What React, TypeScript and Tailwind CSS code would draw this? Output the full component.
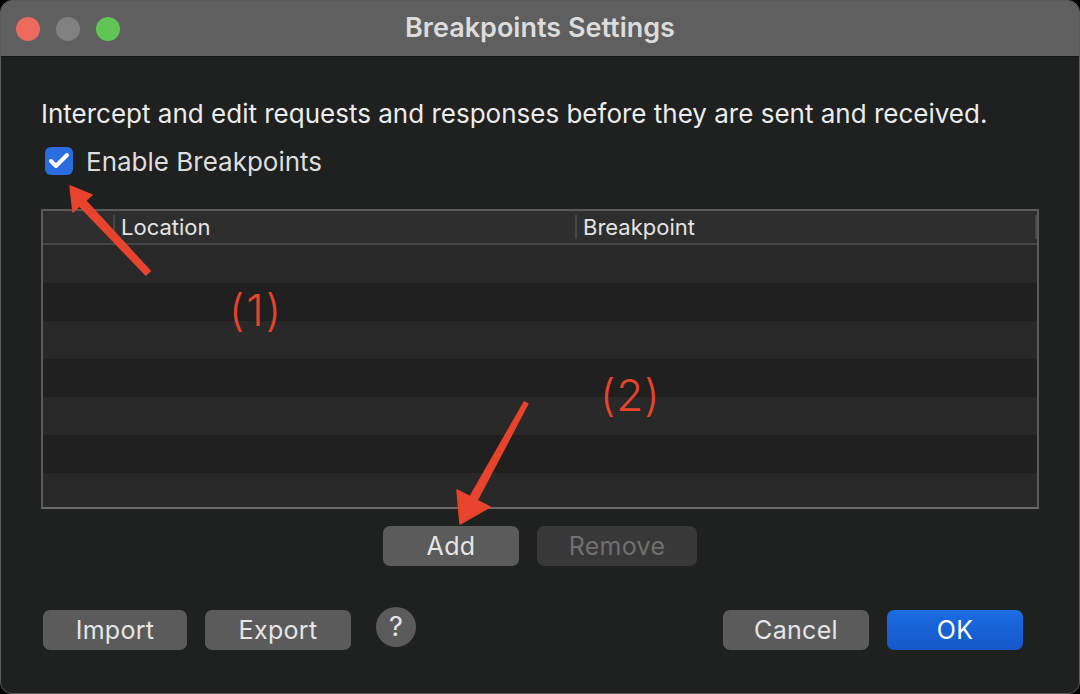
import { Check } from "lucide-react";

const rows = [0, 1, 2, 3, 4, 5, 6];

const Btn = ({ label, w, variant }: { label: string; w: string; variant: "gray" | "dim" | "blue" }) => {
  const tone =
    variant === "blue"
      ? "bg-gradient-to-b from-[#1b6ce2] to-[#1558c9] text-white"
      : variant === "dim"
        ? "bg-[#383838] text-[#707070]"
        : "bg-[#5b5b5b] text-[#e6e6e6]";
  return (
    <button className={`${w} h-[40px] rounded-[7px] text-[25px] tracking-[0.3px] leading-none flex items-center justify-center ${tone}`}>
      {label}
    </button>
  );
};

const App = () => {
  return (
    <div className="w-[1080px] h-[694px] bg-black relative" style={{ fontFamily: "Inter, 'Noto Sans', sans-serif" }}>
      <div className="h-full flex flex-col rounded-[12px] overflow-hidden border border-[#5a5a5a] bg-[#1f2020]">
        {/* title bar */}
        <div className="h-[56px] shrink-0 bg-[#5e5f5e] border-b border-[#161616] flex items-center relative">
          <div className="flex items-center gap-[16px] pl-[15px]">
            <span className="w-[24px] h-[24px] rounded-full bg-[#ec6b5f]" />
            <span className="w-[24px] h-[24px] rounded-full bg-[#808180]" />
            <span className="w-[24px] h-[24px] rounded-full bg-[#61c555]" />
          </div>
          <div className="absolute inset-0 flex items-center justify-center text-[27px] font-semibold text-[#dcdcdc] pointer-events-none">
            Breakpoints Settings
          </div>
        </div>

        {/* body */}
        <div className="flex-1 px-[40px] pt-[41px] flex flex-col">
          <p className="text-[26px] leading-[32px] text-[#ececec]">
            Intercept and edit requests and responses before they are sent and received.
          </p>
          <div className="mt-[15px] h-[32px] flex items-center">
            <span className="ml-[4px] w-[28px] h-[28px] rounded-[6px] bg-[#2a6de0] flex items-center justify-center">
              <Check size={24} strokeWidth={4} className="text-white" />
            </span>
            <span className="ml-[13px] text-[26px] text-[#dedede]">Enable Breakpoints</span>
          </div>

          {/* table */}
          <div className="mt-[32px] h-[300px] border-2 border-[#5a5a5a] border-b-[#6a6a6a] flex flex-col overflow-hidden">
            <div className="h-[34px] shrink-0 bg-[#2e2e2e] border-b-2 border-[#464646] flex items-center text-[22px] text-[#e4e4e4]">
              <div className="w-[70px] h-full" />
              <div className="w-[2px] h-[24px] bg-[#474747]" />
              <div className="w-[460px] pl-[6px]">Location</div>
              <div className="w-[2px] h-[24px] bg-[#474747]" />
              <div className="flex-1 pl-[6px]">Breakpoint</div>
              <div className="w-[2px] h-[24px] bg-[#474747]" />
            </div>
            {rows.map((r) => (
              <div key={r} className={`h-[38px] shrink-0 ${r % 2 === 0 ? "bg-[#292929]" : "bg-[#202020]"}`} />
            ))}
          </div>

          <div className="mt-[17px] flex justify-center gap-[18px]">
            <Btn label="Add" w="w-[136px]" variant="gray" />
            <Btn label="Remove" w="w-[160px]" variant="dim" />
          </div>

          <div className="mt-[44px] flex items-center pl-[2px] pr-[16px]">
            <Btn label="Import" w="w-[144px]" variant="gray" />
            <div className="ml-[18px]">
              <Btn label="Export" w="w-[146px]" variant="gray" />
            </div>
            <span className="ml-[25px] w-[40px] h-[40px] -mt-[6px] rounded-full bg-[#5b5b5b] text-[#e6e6e6] text-[27px] flex items-center justify-center">
              ?
            </span>
            <div className="ml-auto flex gap-[18px]">
              <Btn label="Cancel" w="w-[146px]" variant="gray" />
              <Btn label="OK" w="w-[136px]" variant="blue" />
            </div>
          </div>
        </div>
      </div>

      {/* annotations */}
      <svg className="absolute inset-0 pointer-events-none" width="1080" height="694">
        <polygon
          points="150.2,271 85.5,200.6 92,195 70,186 73,212 79.5,206 145.8,275"
          fill="#e8432c"
          stroke="#e8432c"
          strokeWidth="1.5"
          strokeLinejoin="round"
        />
        <polygon
          points="527.8,404 477.1,500.5 490,507 460,524 457,490 470.1,496.7 524.2,402"
          fill="#e8432c"
          stroke="#e8432c"
          strokeWidth="1.5"
          strokeLinejoin="round"
        />
      </svg>
      <span className="absolute left-[229px] top-[283px] text-[44px] leading-[54px] font-light tracking-[2px] text-[#e8432c]">(1)</span>
      <span className="absolute left-[600px] top-[368px] text-[44px] leading-[54px] font-light tracking-[1px] text-[#e8432c]">(2)</span>
    </div>
  );
};

export default App;
